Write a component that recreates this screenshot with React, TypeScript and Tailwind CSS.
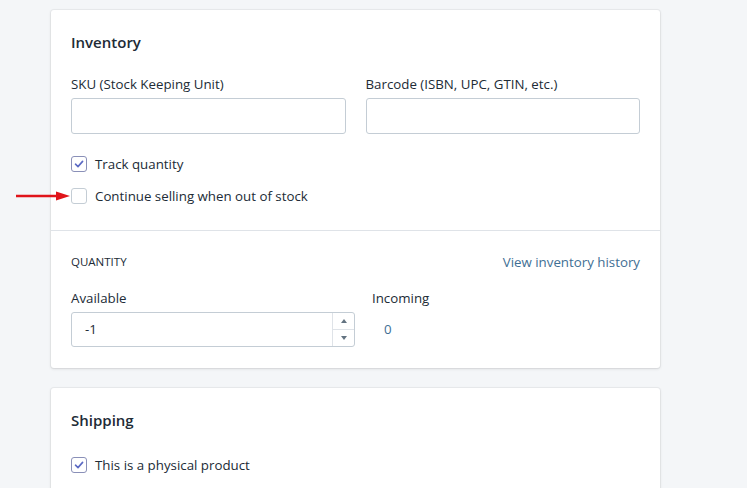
import React from "react";

function Check({ checked }: { checked: boolean }) {
  return (
    <span
      className={`flex h-[16px] w-[16px] items-center justify-center rounded-[3px] border ${
        checked ? "border-[#8a90b8]" : "border-[#c4cdd5]"
      } bg-white`}
    >
      {checked && (
        <svg width="12" height="12" viewBox="0 0 12 12" fill="none">
          <path d="M2.5 6.2 L5 8.6 L9.6 3.4" stroke="#5c6ac4" strokeWidth="1.6" strokeLinecap="round" strokeLinejoin="round" />
        </svg>
      )}
    </span>
  );
}

export default function App() {
  return (
    <div
      className="min-h-[488px] w-[747px] bg-[#f4f6f8] text-[#212b36] pt-[10px] pl-[51px]"
      style={{ fontFamily: '"Open Sans", sans-serif' }}
    >
      <div className="w-[609px] rounded-[3px] bg-white shadow-[0_0_0_1px_rgba(63,63,68,0.05),0_1px_3px_0_rgba(63,63,68,0.15)]">
        <div className="px-[20px] pt-[21px] pb-[26px]">
          <h2 className="text-[15px] font-semibold leading-[22px]">Inventory</h2>
          <div className="mt-[21px] grid grid-cols-2 gap-[20px]">
            <div>
              <div className="text-[13.3px] leading-[20px]">SKU (Stock Keeping Unit)</div>
              <div className="mt-[4px] h-[36px] rounded-[3px] border border-[#c4cdd5]" />
            </div>
            <div>
              <div className="text-[13.3px] leading-[20px]">Barcode (ISBN, UPC, GTIN, etc.)</div>
              <div className="mt-[4px] h-[36px] rounded-[3px] border border-[#c4cdd5]" />
            </div>
          </div>
          <div className="mt-[22px] flex items-center gap-[8px]">
            <Check checked />
            <span className="text-[13.3px] leading-[16px]">Track quantity</span>
          </div>
          <div className="relative mt-[16px] flex items-center gap-[8px]">
            <Check checked={false} />
            <span className="text-[13.3px] leading-[16px]">Continue selling when out of stock</span>
            <svg className="absolute left-[-55px] top-[2px]" width="54" height="12" viewBox="0 0 54 12">
              <line x1="0" y1="6" x2="42" y2="6" stroke="#e0141a" strokeWidth="2.5" />
              <path d="M40 1.5 L54 6 L40 10.5 Z" fill="#e0141a" />
            </svg>
          </div>
        </div>
        <div className="border-t border-[#dfe3e8] px-[20px] pt-[22px] pb-[21px]">
          <div className="flex items-center justify-between">
            <span className="text-[11.5px] font-medium uppercase leading-[16px]">Quantity</span>
            <span className="text-[13.3px] leading-[18px] text-[#3f6f94]">View inventory history</span>
          </div>
          <div className="mt-[17px] flex">
            <div className="w-[284px]">
              <div className="text-[13.3px] leading-[20px]">Available</div>
              <div className="mt-[4px] flex h-[35px] rounded-[3px] border border-[#c4cdd5]">
                <div className="flex flex-1 items-center pl-[13px] text-[13.3px]">-1</div>
                <div className="flex w-[22px] flex-col border-l border-[#dfe3e8]">
                  <div className="flex flex-1 items-center justify-center border-b border-[#dfe3e8]">
                    <svg width="6" height="4" viewBox="0 0 6 4"><path d="M0 4 L3 0 L6 4 Z" fill="#637381" /></svg>
                  </div>
                  <div className="flex flex-1 items-center justify-center">
                    <svg width="6" height="4" viewBox="0 0 6 4"><path d="M0 0 L3 4 L6 0 Z" fill="#637381" /></svg>
                  </div>
                </div>
              </div>
            </div>
            <div className="ml-[17px]">
              <div className="text-[13.3px] leading-[20px]">Incoming</div>
              <div className="mt-[4px] flex h-[35px] items-center pl-[12px] text-[13.3px] text-[#3f6f94]">0</div>
            </div>
          </div>
        </div>
      </div>
      <div className="mt-[20px] w-[609px] rounded-t-[3px] bg-white px-[20px] pt-[21px] pb-[40px] shadow-[0_0_0_1px_rgba(63,63,68,0.05),0_1px_3px_0_rgba(63,63,68,0.15)]">
        <h2 className="text-[15px] font-semibold leading-[22px]">Shipping</h2>
        <div className="mt-[26px] flex items-center gap-[8px]">
          <Check checked />
          <span className="text-[13.3px] leading-[16px]">This is a physical product</span>
        </div>
      </div>
    </div>
  );
}
